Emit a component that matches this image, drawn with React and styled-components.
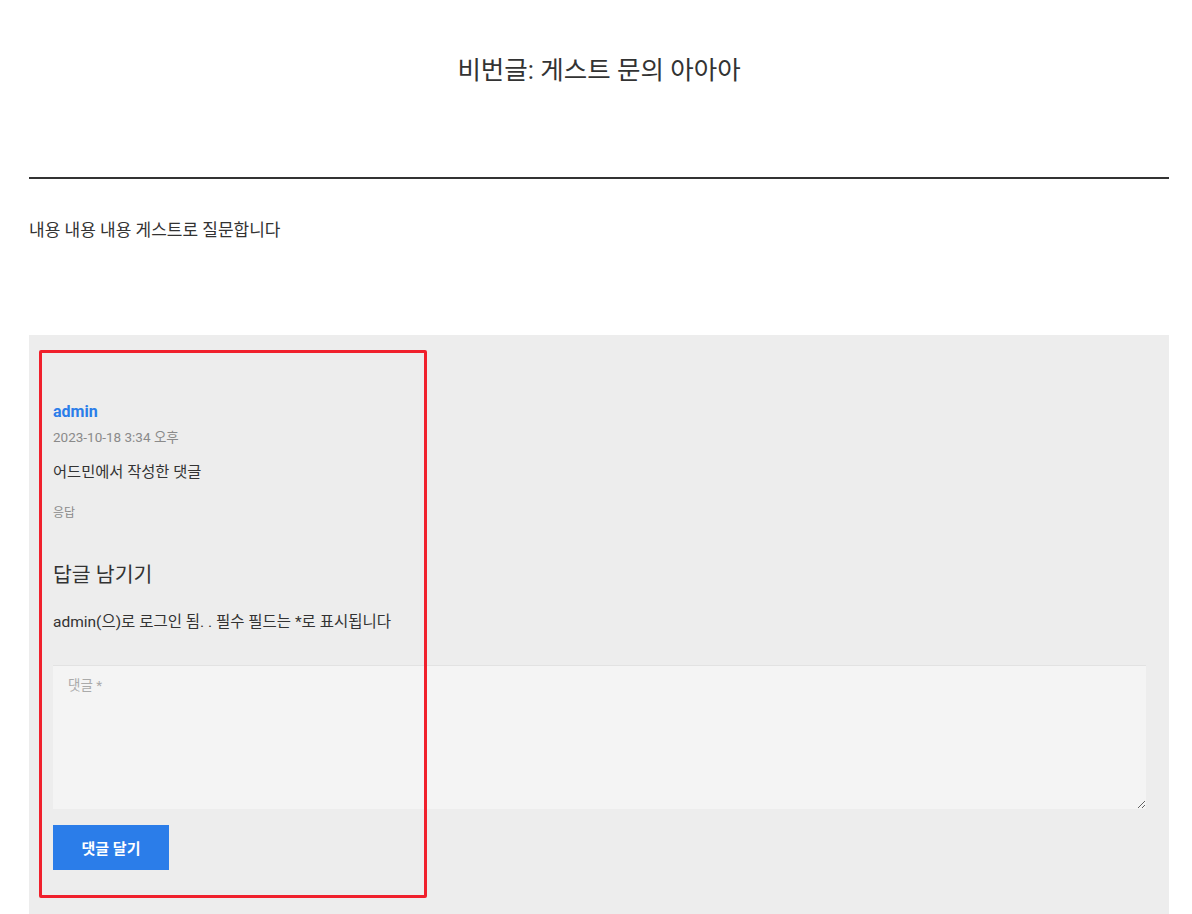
import React from "react";
import styled, { createGlobalStyle } from "styled-components";

const Global = createGlobalStyle`
  html, body { margin: 0; padding: 0; background: #fff; }
  body { font-family: Roboto, "Noto Sans CJK KR", sans-serif; color: #333; }
  * { box-sizing: border-box; }
`;

const Page = styled.div`
  padding: 0 23px 0 29px;
  width: 1192px;
  position: relative;
`;

const Title = styled.h1`
  margin: 0;
  padding-top: 51px;
  height: 177px;
  text-align: center;
  font-size: 25.5px;
  font-weight: 400;
  line-height: 38px;
  color: #333;
`;

const Rule = styled.hr`
  margin: 0;
  border: none;
  height: 2px;
  background: #333;
`;

const Body = styled.p`
  margin: 0;
  padding-top: 40px;
  height: 156px;
  font-size: 17px;
  line-height: 22px;
  color: #333;
`;

const Comments = styled.section`
  background: #ededed;
  padding: 67px 23px 44px 24px;
  min-height: 580px;
`;

const Author = styled.a`
  display: block;
  font-size: 16px;
  font-weight: 700;
  color: #2b7de9;
  line-height: 20px;
`;

const Meta = styled.div`
  margin-top: 5px;
  font-size: 13.5px;
  color: #8a8a8a;
  line-height: 20px;
`;

const Text = styled.p`
  margin: 15px 0 0;
  font-size: 15.3px;
  line-height: 20px;
  color: #333;
`;

const Reply = styled.div`
  margin-top: 21px;
  font-size: 12px;
  color: #8a8a8a;
  line-height: 20px;
`;

const ReplyTitle = styled.h3`
  margin: 38px 0 0;
  font-size: 20.5px;
  font-weight: 400;
  line-height: 28px;
  color: #333;
`;

const Note = styled.p`
  margin: 23px 0 0;
  font-size: 15.5px;
  line-height: 20px;
  color: #333;
`;

const Area = styled.textarea`
  display: block;
  margin-top: 33px;
  width: 100%;
  height: 144px;
  background: #f4f4f4;
  border: none;
  border-top: 1px solid #e2e2e2;
  padding: 8px 15px;
  font-family: Roboto, "Noto Sans CJK KR", sans-serif;
  font-size: 13.5px;
  color: #333;
  resize: vertical;
  &::placeholder { color: #aaa; }
`;

const Button = styled.button`
  margin-top: 16px;
  width: 116px;
  height: 45px;
  border: none;
  background: #2b7de9;
  color: #fff;
  font-family: Roboto, "Noto Sans CJK KR", sans-serif;
  font-weight: 700;
  font-size: 15px;
`;

const Highlight = styled.div`
  position: absolute;
  left: 39px;
  top: 350px;
  width: 388px;
  height: 548px;
  border: 3px solid #f0202c;
  border-radius: 2px;
  pointer-events: none;
`;

export default function App() {
  return (
    <>
      <Global />
      <Page>
        <Title>비번글: 게스트 문의 아아아</Title>
        <Rule />
        <Body>내용 내용 내용 게스트로 질문합니다</Body>
        <Comments>
          <Author>admin</Author>
          <Meta>2023-10-18 3:34 오후</Meta>
          <Text>어드민에서 작성한 댓글</Text>
          <Reply>응답</Reply>
          <ReplyTitle>답글 남기기</ReplyTitle>
          <Note>admin(으)로 로그인 됨. . 필수 필드는 *로 표시됩니다</Note>
          <Area placeholder="댓글 *" />
          <Button>댓글 달기</Button>
        </Comments>
        <Highlight />
      </Page>
    </>
  );
}
